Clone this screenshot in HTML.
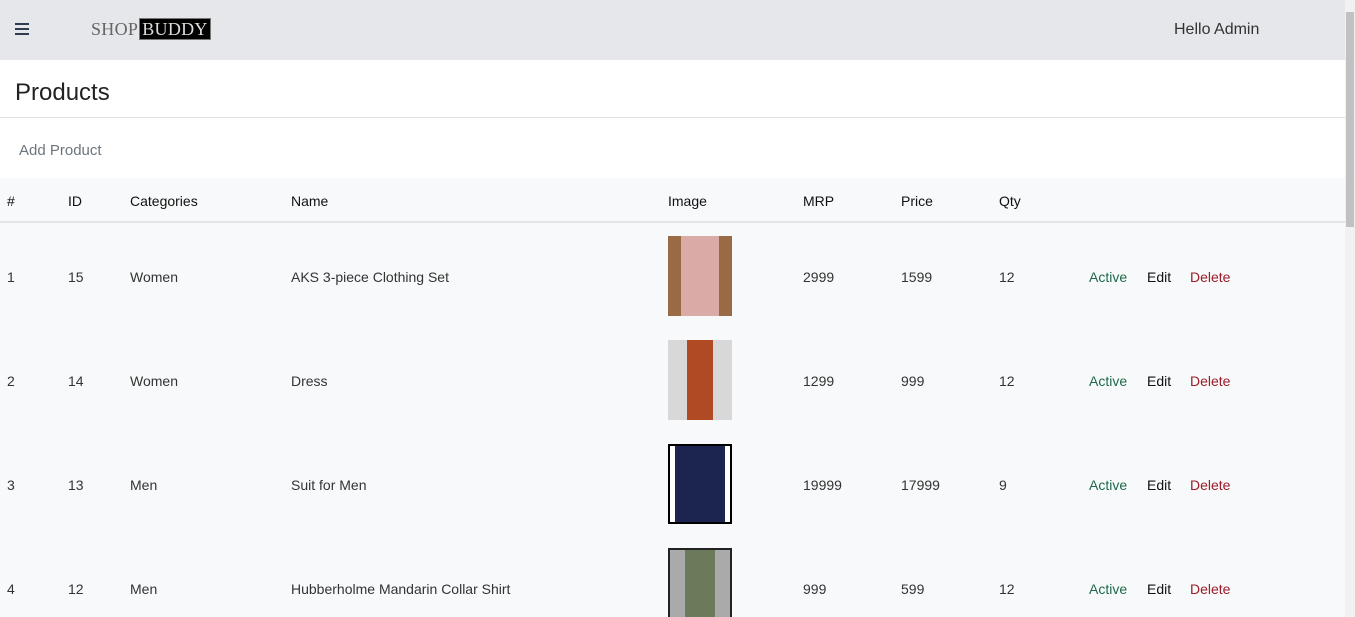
<!DOCTYPE html>
<html><head><style>
*{margin:0;padding:0;box-sizing:border-box}
html,body{width:1355px;height:617px;overflow:hidden}
body{font-family:"Liberation Sans",sans-serif;background:#fff;position:relative;color:#212529}
.hdr{position:absolute;left:0;top:0;width:1345px;height:60px;background:#e5e7eb}
.sb{position:absolute;right:0;top:0;width:10px;height:617px;background:#f1f1f1}
.sb i{position:absolute;left:1px;top:12px;width:8px;height:215px;background:#c1c1c1}
.burger{position:absolute;left:15px;top:23px;width:14px}
.burger b{display:block;height:2px;background:#2f3b52;margin-bottom:3px}
.logo{position:absolute;left:91px;top:19px;font-family:"Liberation Serif",serif;font-size:18px;color:#666;letter-spacing:0.3px}
.logo span{background:#000;color:#ddd;padding:0 2px;border:1px solid #777;margin-left:1px}
.hello{position:absolute;left:1174px;top:21px;font-size:16px;color:#333}
h1{position:absolute;left:15px;top:79px;font-size:24px;font-weight:normal;color:#222}
.line{position:absolute;left:0;top:117px;width:1345px;height:1px;background:#dee2e6}
.add{position:absolute;left:19px;top:142px;font-size:15px;color:#6c757d}
.tbl{position:absolute;left:0;top:178px;width:1345px;height:439px;background:#f8f9fa}
.th{position:absolute;top:0;height:45px;width:1345px;border-bottom:2px solid #e3e5e8}
.c{position:absolute;font-size:14px;color:#333;white-space:nowrap;margin-top:1px}
.th .c{top:14px;color:#111}
.img{position:absolute;left:668px;width:64px;height:80px}
</style></head><body>
<div class="hdr">
<div class="burger"><b></b><b></b><b></b></div>
<div class="logo">SHOP<span>BUDDY</span></div>
<div class="hello">Hello Admin</div>
</div>
<div class="sb"><i></i></div>
<h1>Products</h1>
<div class="line"></div>
<div class="add">Add Product</div>
<div class="tbl">
<div class="th">
<div class="c" style="left:7px">#</div><div class="c" style="left:68px">ID</div><div class="c" style="left:130px">Categories</div><div class="c" style="left:291px">Name</div><div class="c" style="left:668px">Image</div><div class="c" style="left:803px">MRP</div><div class="c" style="left:901px">Price</div><div class="c" style="left:999px">Qty</div>
</div>
</div>
<div style="position:absolute;left:0;top:0">
<div class="img" style="top:236px;background:linear-gradient(90deg,#9a6a45 0 20%,#d9aaa6 20% 80%,#9a6a45 80%)"></div>
<div class="c" style="left:7px;top:268px">1</div><div class="c" style="left:68px;top:268px">15</div><div class="c" style="left:130px;top:268px">Women</div><div class="c" style="left:291px;top:268px">AKS 3-piece Clothing Set</div><div class="c" style="left:803px;top:268px">2999</div><div class="c" style="left:901px;top:268px">1599</div><div class="c" style="left:999px;top:268px">12</div>
<div class="c" style="left:1089px;top:268px;color:#1d6a4a">Active</div><div class="c" style="left:1147px;top:268px;color:#111">Edit</div><div class="c" style="left:1190px;top:268px;color:#9b1c2a">Delete</div>
<div class="img" style="top:340px;background:linear-gradient(90deg,#d8d8d8 0 30%,#b04a25 30% 70%,#d8d8d8 70%)"></div>
<div class="c" style="left:7px;top:372px">2</div><div class="c" style="left:68px;top:372px">14</div><div class="c" style="left:130px;top:372px">Women</div><div class="c" style="left:291px;top:372px">Dress</div><div class="c" style="left:803px;top:372px">1299</div><div class="c" style="left:901px;top:372px">999</div><div class="c" style="left:999px;top:372px">12</div>
<div class="c" style="left:1089px;top:372px;color:#1d6a4a">Active</div><div class="c" style="left:1147px;top:372px;color:#111">Edit</div><div class="c" style="left:1190px;top:372px;color:#9b1c2a">Delete</div>
<div class="img" style="top:444px;border:2px solid #000;background:linear-gradient(90deg,#fff 0 8%,#1c2550 8% 92%,#fff 92%)"></div>
<div class="c" style="left:7px;top:476px">3</div><div class="c" style="left:68px;top:476px">13</div><div class="c" style="left:130px;top:476px">Men</div><div class="c" style="left:291px;top:476px">Suit for Men</div><div class="c" style="left:803px;top:476px">19999</div><div class="c" style="left:901px;top:476px">17999</div><div class="c" style="left:999px;top:476px">9</div>
<div class="c" style="left:1089px;top:476px;color:#1d6a4a">Active</div><div class="c" style="left:1147px;top:476px;color:#111">Edit</div><div class="c" style="left:1190px;top:476px;color:#9b1c2a">Delete</div>
<div class="img" style="top:548px;height:69px;border:2px solid #222;border-bottom:none;background:linear-gradient(90deg,#aaa 0 25%,#6b7a5a 25% 75%,#aaa 75%)"></div>
<div class="c" style="left:7px;top:580px">4</div><div class="c" style="left:68px;top:580px">12</div><div class="c" style="left:130px;top:580px">Men</div><div class="c" style="left:291px;top:580px">Hubberholme Mandarin Collar Shirt</div><div class="c" style="left:803px;top:580px">999</div><div class="c" style="left:901px;top:580px">599</div><div class="c" style="left:999px;top:580px">12</div>
<div class="c" style="left:1089px;top:580px;color:#1d6a4a">Active</div><div class="c" style="left:1147px;top:580px;color:#111">Edit</div><div class="c" style="left:1190px;top:580px;color:#9b1c2a">Delete</div>
</div>
</body></html>
